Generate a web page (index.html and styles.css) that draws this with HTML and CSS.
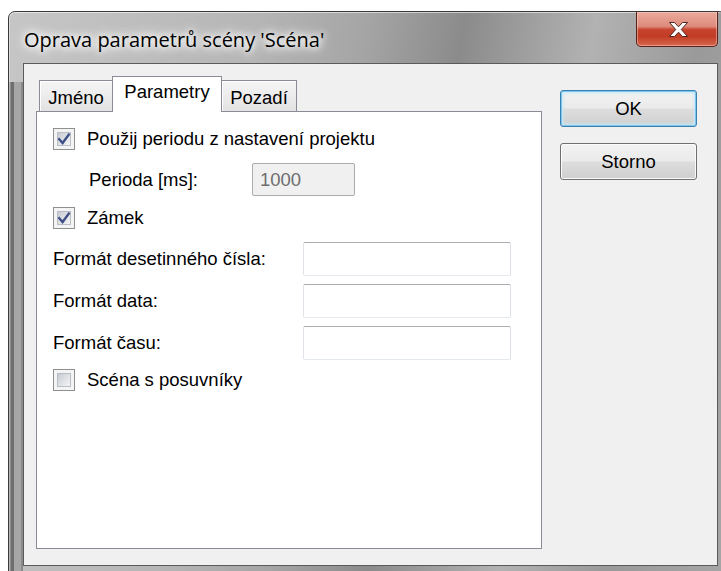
FILE: index.html
```html
<!DOCTYPE html>
<html lang="cs">
<head>
<meta charset="utf-8">
<title>Oprava parametrů scény</title>
<link rel="stylesheet" href="styles.css">
</head>
<body>
<div class="window">
  <div class="titlebar">
    <span class="title">Oprava parametrů scény 'Scéna'</span>
    <button class="close" type="button" aria-label="Zavřít">
      <svg width="19" height="15" viewBox="0 0 19 15">
        <polygon points="0.5,0.5 5.5,0.5 9.5,4.8 13.5,0.5 18.5,0.5 12.3,7.5 18.5,14.5 13.5,14.5 9.5,10.2 5.5,14.5 0.5,14.5 6.7,7.5" fill="#ffffff" stroke="#4b2622" stroke-width="1" stroke-linejoin="round"/>
      </svg>
    </button>
  </div>
  <div class="client">
    <div class="tabbox">
      <div class="tabstrip">
        <div class="tab tab-jmeno">Jméno</div>
        <div class="tab tab-active">Parametry</div>
        <div class="tab tab-pozadi">Pozadí</div>
      </div>
      <div class="panel">
        <div class="row row-check">
          <span class="cb"><span class="cb-inner"><svg class="tick" width="14" height="14" viewBox="0 0 14 14"><path d="M2.2 7.2 L5.6 11 L11.8 2.6" fill="none" stroke="#3d4f86" stroke-width="2.4" stroke-linecap="square"/></svg></span></span>
          <span class="cb-label">Použij periodu z nastavení projektu</span>
        </div>
        <div class="row row-period">
          <span class="period-label">Perioda [ms]:</span>
          <span class="input input-disabled">1000</span>
        </div>
        <div class="row row-check row-lock">
          <span class="cb"><span class="cb-inner"><svg class="tick" width="14" height="14" viewBox="0 0 14 14"><path d="M2.2 7.2 L5.6 11 L11.8 2.6" fill="none" stroke="#3d4f86" stroke-width="2.4" stroke-linecap="square"/></svg></span></span>
          <span class="cb-label">Zámek</span>
        </div>
        <div class="row row-field row-first-field">
          <span class="field-label">Formát desetinného čísla:</span>
          <span class="input"></span>
        </div>
        <div class="row row-field">
          <span class="field-label">Formát data:</span>
          <span class="input"></span>
        </div>
        <div class="row row-field">
          <span class="field-label">Formát času:</span>
          <span class="input"></span>
        </div>
        <div class="row row-check row-scroll">
          <span class="cb"><span class="cb-inner"></span></span>
          <span class="cb-label">Scéna s posuvníky</span>
        </div>
      </div>
    </div>
    <div class="buttons">
      <button class="btn btn-default" type="button">OK</button>
      <button class="btn" type="button">Storno</button>
    </div>
  </div>
</div>
</body>
</html>
```

FILE: styles.css
```css
html, body {
  margin: 0;
  height: 100%;
  overflow: hidden;
  background: #ffffff;
}

body {
  font-family: "Liberation Sans", Arial, sans-serif;
  font-size: 18.5px;
  color: #000;
}

/* Aero-style window frame */
.window {
  box-sizing: border-box;
  width: 718px;
  height: 575px;
  margin: 11px 0 0 8px;
  border: 1px solid #3a3a3a;
  border-radius: 7px 7px 0 0;
  display: flex;
  flex-direction: column;
  background:
    linear-gradient(to right, #8e8e8e 0 2px, #6e6e6e 2px 5px, #a6a6a6 5px 12px, #8a8a8a 12px 14px) no-repeat 0 70px / 14px 100%,
    linear-gradient(100deg, #c6c6c6 0%, #b6b6b6 30%, #a5a5a5 44%, #8b8b8b 56%, #a1a1a1 65%, #b2b2b2 72%, #9a9a9a 85%, #a6a6a6 100%);
  box-shadow: inset 0 1px 0 rgba(255, 255, 255, 0.55), inset 1px 0 0 rgba(255, 255, 255, 0.35);
}

.titlebar {
  display: flex;
  align-items: flex-start;
  height: 51px;
  padding-left: 15px;
  flex: none;
}

.title {
  font-family: "Open Sans", "Liberation Sans", sans-serif;
  font-size: 20px;
  line-height: 24px;
  padding-top: 16px;
  color: #000;
  text-shadow: 0 0 6px #fff, 0 0 10px #fff, 0 0 14px rgba(255, 255, 255, 0.9), 0 0 18px rgba(255, 255, 255, 0.7);
}

.close {
  margin: -1px 7px 0 auto;
  width: 82px;
  height: 36px;
  padding: 0;
  border: 1px solid #5a211b;
  border-top-color: #3a3a3a;
  border-radius: 0 0 5px 5px;
  background: linear-gradient(#eaa99c 0%, #de8c7c 42%, #c6432d 52%, #c33d26 72%, #d5684d 100%);
  box-shadow: inset 0 0 0 1px rgba(255, 220, 210, 0.45);
  display: flex;
  align-items: center;
  justify-content: center;
}

.close svg {
  display: block;
  margin-left: 2px;
}

/* client area of the dialog */
.client {
  box-sizing: border-box;
  height: 503px;
  margin: 0 7px 0 14px;
  border: 1px solid #5b5b5b;
  background: #f0f0f0;
  display: flex;
  align-items: flex-start;
  padding: 12px 0 0 12px;
}

.tabbox {
  width: 506px;
  display: flex;
  flex-direction: column;
}

.tabstrip {
  height: 35px;
  display: flex;
  align-items: flex-end;
  padding-left: 3px;
  position: relative;
  z-index: 1;
}

.tab {
  box-sizing: border-box;
  height: 31px;
  border: 1px solid #898c95;
  border-bottom: none;
  background: linear-gradient(#f5f5f5 0%, #ececec 50%, #e2e2e2 100%);
  box-shadow: inset 1px 1px 0 #ffffff;
  text-align: center;
  line-height: 24px;
  padding-top: 5px;
}

.tab-jmeno {
  width: 74px;
}

.tab-active {
  width: 110px;
  height: 36px;
  margin-left: -1px;
  margin-bottom: -1px;
  padding-top: 3px;
  background: #ffffff;
  box-shadow: none;
  position: relative;
  z-index: 2;
}

.tab-pozadi {
  width: 76px;
  margin-left: -1px;
}

.panel {
  box-sizing: border-box;
  height: 438px;
  border: 1px solid #898c95;
  background: #ffffff;
  padding: 16px 0 0 16px;
  display: flex;
  flex-direction: column;
}

.row {
  display: flex;
  align-items: center;
}

.row-check {
  height: 22px;
}

.row-period {
  margin-top: 13px;
  height: 33px;
  padding-left: 36px;
}

.row-lock {
  margin-top: 11px;
}

.row-field {
  margin-top: 8px;
  height: 34px;
}

.row-first-field {
  margin-top: 13px;
}

.row-scroll {
  margin-top: 9px;
}

/* checkbox */
.cb {
  box-sizing: border-box;
  width: 22px;
  height: 22px;
  border: 1px solid #8e8f8f;
  background: #f4f4f4;
  padding: 3px;
  flex: none;
}

.cb-inner {
  box-sizing: border-box;
  display: flex;
  align-items: center;
  justify-content: center;
  width: 14px;
  height: 14px;
  border: 1px solid #b9bdc6;
  background: linear-gradient(135deg, #c6cad1 0%, #dfe1e5 50%, #f4f4f5 100%);
}

.tick {
  display: block;
  flex: none;
}

.cb-label {
  margin-left: 12px;
}

.period-label {
  width: 163px;
  flex: none;
}

.field-label {
  width: 250px;
  flex: none;
}

/* text boxes */
.input {
  box-sizing: border-box;
  width: 208px;
  height: 34px;
  border: 1px solid;
  border-color: #abadb3 #dbdfe6 #e3e9ef #e2e3ea;
  border-radius: 2px;
  background: #ffffff;
}

.input-disabled {
  width: 103px;
  height: 33px;
  display: flex;
  align-items: center;
  padding-left: 7px;
  border-color: #a9acb0;
  background: #f0f0f0;
  color: #6d6d6d;
}

/* command buttons */
.buttons {
  margin: 14px 0 0 18px;
  display: flex;
  flex-direction: column;
  gap: 16px;
}

.btn {
  box-sizing: border-box;
  width: 137px;
  height: 37px;
  padding: 0;
  border: 1px solid #707070;
  border-radius: 3px;
  background: linear-gradient(#f2f2f2 0%, #ebebeb 48%, #dddddd 52%, #cfcfcf 100%);
  box-shadow: inset 0 0 0 1px #fbfbfb;
  font-family: inherit;
  font-size: 18.5px;
  color: #000;
}

.btn-default {
  border-color: #3c7fb1;
  box-shadow: inset 0 0 0 1px #7dc6ee, inset 0 0 3px 2px #c3e8fa;
}
```
